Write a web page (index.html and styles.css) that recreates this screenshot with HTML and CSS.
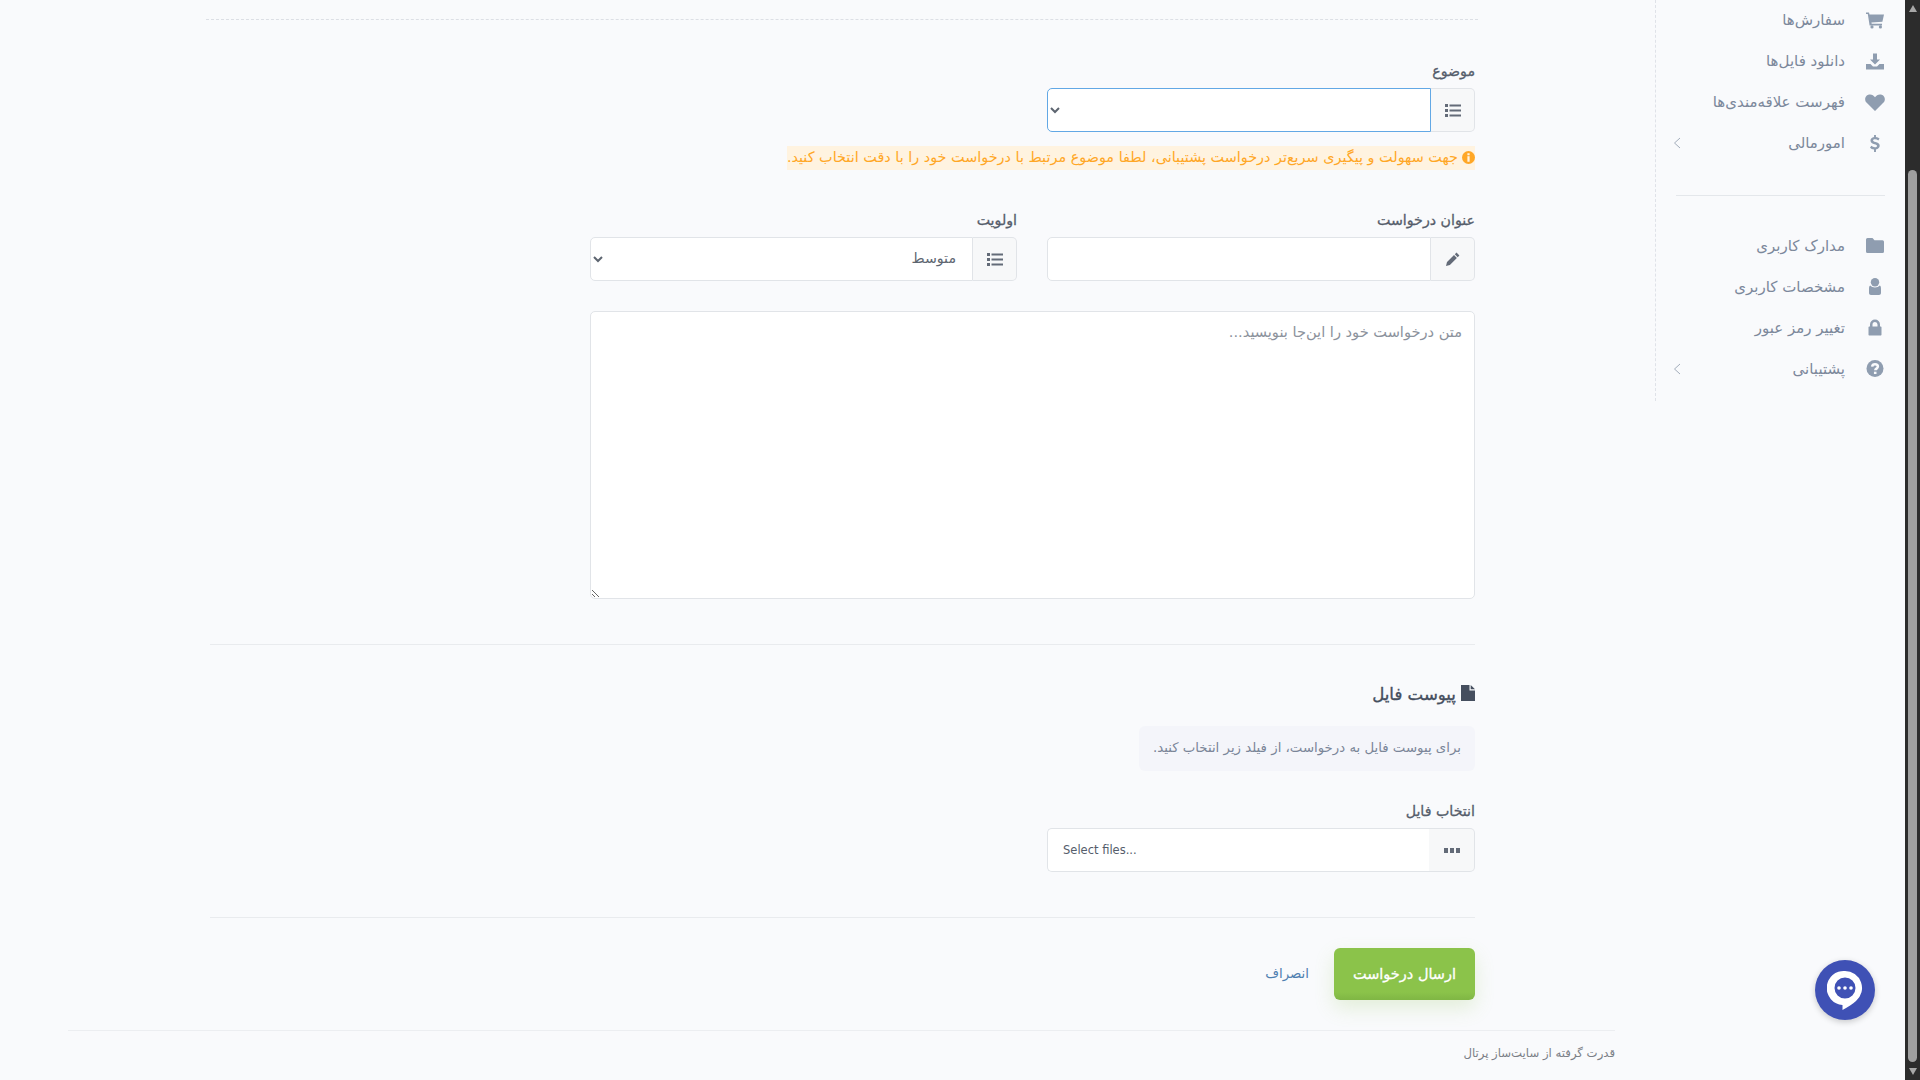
FILE: index.html
```html
<!DOCTYPE html>
<html lang="fa" dir="rtl">
<head>
  <meta charset="UTF-8">
  <title>ارسال درخواست</title>
  <link rel="stylesheet" href="styles.css">
</head>
<body>
  <div class="page">
    <!-- scrollbar -->
    <div class="scrollbar">
      <span class="arrow-up"></span>
      <span class="thumb"></span>
      <span class="arrow-down"></span>
    </div>

    <!-- sidebar -->
    <aside class="sidebar">
      <a class="side-item">
        <svg class="side-icon" viewBox="0 0 18 16"><path d="M0 0h3l.5 2H18l-1.600 7.200-11 .9.3 1.100H16V13H3.600L1.800 1.600H0z"/><circle cx="6" cy="14.400" r="1.600"/><circle cx="14.400" cy="14.400" r="1.600"/></svg>
        <span>سفارش‌ها</span>
      </a>
      <a class="side-item">
        <svg class="side-icon" viewBox="0 0 18 16"><path d="M7 0h4v6h3l-5 5-5-5h3z"/><path d="M0 10.500h4.500L7 13h4l2.500-2.500H18V16H0z"/></svg>
        <span>دانلود فایل‌ها</span>
      </a>
      <a class="side-item">
        <svg class="side-icon heart" viewBox="0 0 20 17"><path d="M10 17 1.500 8.600C-1.200 5.600.3.500 5 .5c2.200 0 3.800 1.100 5 2.800C11.200 1.600 12.800.5 15 .5c4.700 0 6.200 5.100 3.500 8.100z"/></svg>
        <span>فهرست علاقه‌مندی‌ها</span>
      </a>
      <a class="side-item">
        <svg class="side-icon" viewBox="0 0 18 18"><path d="M8 0h2v2.200c1.600.2 2.900.8 3.800 1.500l-1.300 2.100c-1-.7-2.200-1.200-3.500-1.200-1.300 0-2 .5-2 1.200 0 .8.800 1.100 2.500 1.600 2.500.7 4.500 1.600 4.500 4.100 0 2-1.500 3.400-4 3.800V18H8v-2.700c-1.900-.2-3.400-1-4.300-1.900l1.400-2c1.100.9 2.400 1.500 3.800 1.500 1.400 0 2.200-.5 2.200-1.300 0-.9-.9-1.200-2.600-1.700-2.300-.7-4.300-1.500-4.300-4 0-2 1.500-3.300 3.800-3.700z"/></svg>
        <span>امورمالی</span>
        <svg class="side-chevron" viewBox="0 0 8 12"><path d="M7 1 1.500 6 7 11"/></svg>
      </a>
      <div class="side-divider"></div>
      <a class="side-item">
        <svg class="side-icon" viewBox="0 0 18 15"><path d="M1.500 0h5l2 2.200h8A1.500 1.500 0 0 1 18 3.700v9.800a1.500 1.500 0 0 1-1.500 1.500h-15A1.500 1.500 0 0 1 0 13.500v-12A1.500 1.500 0 0 1 1.500 0z"/></svg>
        <span>مدارک کاربری</span>
      </a>
      <a class="side-item">
        <svg class="side-icon" viewBox="0 0 18 17"><circle cx="9" cy="4.200" r="4.200"/><path d="M4.200 7.500c1.100 1.200 2.900 2 4.800 2s3.700-.8 4.800-2c1 .4 1.200 1.800 1.200 3.500v4c0 1.200-.8 2-2 2H5c-1.200 0-2-.8-2-2v-4c0-1.700.2-3.100 1.200-3.500z"/></svg>
        <span>مشخصات کاربری</span>
      </a>
      <a class="side-item">
        <svg class="side-icon" viewBox="0 0 18 16"><path d="M4 7V5a5 5 0 0 1 10 0v2h.5c.6 0 1 .4 1 1v7c0 .6-.4 1-1 1h-11c-.6 0-1-.4-1-1V8c0-.6.4-1 1-1zm2.500 0h5V5a2.500 2.500 0 0 0-5 0z"/></svg>
        <span>تغییر رمز عبور</span>
      </a>
      <a class="side-item">
        <svg class="side-icon" viewBox="0 0 16 16"><circle cx="8" cy="8" r="8"/><path class="cut" d="M5.300 6.200C5.500 4.800 6.600 4 8 4c1.600 0 2.700.9 2.700 2.200 0 1.900-2.400 1.900-2.400 3.500"/><rect class="cut-fill" x="7" y="11" width="2.400" height="2.200"/></svg>
        <span>پشتیبانی</span>
        <svg class="side-chevron" viewBox="0 0 8 12"><path d="M7 1 1.500 6 7 11"/></svg>
      </a>
    </aside>

    <main class="main">
      <div class="content">
        <div class="top-rule"></div>

        <div class="field-row first">
          <div class="field">
            <label class="label">موضوع</label>
            <div class="group">
              <span class="addon">
                <svg class="addon-icon" viewBox="0 0 16 13"><rect y="0" width="3" height="3"/><rect y="5" width="3" height="3"/><rect y="10" width="3" height="3"/><rect x="4.500" y=".5" width="11.500" height="2"/><rect x="4.500" y="5.500" width="11.500" height="2"/><rect x="4.500" y="10.500" width="11.500" height="2"/></svg>
              </span>
              <select class="control is-focus"><option></option></select>
            </div>
          </div>
        </div>
        <div class="hint">
          <span class="hint-text">
            <svg class="hint-icon" viewBox="0 0 14 14"><circle cx="7" cy="7" r="7"/><rect class="hint-i" x="5.800" y="2.400" width="2.400" height="2.200"/><rect class="hint-i" x="5.800" y="5.600" width="2.400" height="6"/></svg>
            <span class="raise">جهت سهولت و پیگیری سریع‌تر درخواست پشتیبانی، لطفا موضوع مرتبط با درخواست خود را با دقت انتخاب کنید.</span>
          </span>
        </div>

        <div class="field-row second">
          <div class="field">
            <label class="label">عنوان درخواست</label>
            <div class="group">
              <span class="addon">
                <svg class="addon-icon pencil" viewBox="0 0 14 14"><path d="M10.500.6 13.400 3.500 11.700 5.200 8.800 2.300zM8 3.100 10.900 6l-7 7L0 14l1-3.900z"/></svg>
              </span>
              <input class="control" type="text">
            </div>
          </div>
          <div class="field">
            <label class="label">اولویت</label>
            <div class="group">
              <span class="addon">
                <svg class="addon-icon" viewBox="0 0 16 13"><rect y="0" width="3" height="3"/><rect y="5" width="3" height="3"/><rect y="10" width="3" height="3"/><rect x="4.500" y=".5" width="11.500" height="2"/><rect x="4.500" y="5.500" width="11.500" height="2"/><rect x="4.500" y="10.500" width="11.500" height="2"/></svg>
              </span>
              <select class="control"><option>متوسط</option></select>
            </div>
          </div>
        </div>

        <textarea class="message" placeholder="متن درخواست خود را این‌جا بنویسید..."></textarea>

        <div class="rule rule-upper"></div>

        <h3 class="section-title">
          <svg class="section-icon" viewBox="0 0 14 16"><path d="M0 0h8.500v5.500H14V16H0z"/><path d="M9.700 0 14 4.300H9.700z"/></svg>
          پیوست فایل
        </h3>
        <div class="note-row"><div class="note">برای پیوست فایل به درخواست، از فیلد زیر انتخاب کنید.</div></div>

        <div class="field-row third">
          <div class="field">
            <label class="label">انتخاب فایل</label>
            <div class="group">
              <span class="addon addon-plain">
                <svg class="dots" viewBox="0 0 16 5"><rect width="4" height="5"/><rect x="6" width="4" height="5"/><rect x="12" width="4" height="5"/></svg>
              </span>
              <div class="control file-text" dir="ltr">Select files...</div>
            </div>
          </div>
        </div>

        <div class="rule rule-lower"></div>

        <div class="actions">
          <button class="btn-send">ارسال درخواست</button>
          <a class="btn-cancel">انصراف</a>
        </div>
      </div>

      <footer class="footer">قدرت گرفته از سایت‌ساز پرتال</footer>
    </main>
  </div>

  <button class="chat-button" aria-label="chat">
    <svg viewBox="0 0 36 42" width="36" height="42"><path d="M18 1a17 17 0 0 1 11 30c-3.200 2.800-8 6-13.500 9V35A17 17 0 0 1 18 1zm0 6.500a10.500 10.500 0 1 0 0 21 10.500 10.500 0 0 0 0-21z" fill="#fff" fill-rule="evenodd"/><circle cx="12" cy="18" r="1.800" fill="#fff"/><circle cx="18" cy="18" r="1.800" fill="#fff"/><circle cx="24" cy="18" r="1.800" fill="#fff"/></svg>
  </button>
</body>
</html>
```

FILE: styles.css
```css
* {
  box-sizing: border-box;
}

html, body {
  margin: 0;
  padding: 0;
  height: 1080px;
  overflow: hidden;
}

body {
  font-family: "DejaVu Sans", sans-serif;
  background: #f9fafc;
  color: #4a5260;
  font-size: 14px;
}

.page {
  display: flex;
  height: 1080px;
  overflow: hidden;
}

/* Scrollbar */
.scrollbar {
  width: 15px;
  flex: none;
  background: #2c2c2c;
  display: flex;
  flex-direction: column;
  align-items: center;
}

.thumb {
  width: 9px;
  height: 892px;
  margin-top: 158px;
  border-radius: 5px;
  background: #a0a0a0;
}

.arrow-up, .arrow-down {
  width: 0;
  height: 0;
  border-left: 4.5px solid transparent;
  border-right: 4.5px solid transparent;
}

.arrow-up {
  margin-top: 5px;
  border-bottom: 7px solid #a8a8a8;
}

.arrow-down {
  margin-top: 6px;
  border-top: 7px solid #a8a8a8;
}

/* Sidebar */
.sidebar {
  width: 250px;
  flex: none;
  height: 401px;
  padding: 0 20px;
  border-left: 1px dashed #dfe2e8;
}

.side-item {
  display: flex;
  align-items: center;
  height: 41px;
  color: #7c889b;
  font-size: 15px;
}

.side-item span {
  margin-top: -2px;
}

.side-divider ~ .side-item span {
  margin-top: 0;
}

.side-icon {
  width: 18px;
  height: 17px;
  margin: 0 1px 0 21px;
  fill: #8f9db0;
  flex: none;
}

.side-icon.heart {
  width: 20px;
  margin: 0 0 0 20px;
}

.side-icon .cut {
  fill: none;
  stroke: #f9fafc;
  stroke-width: 2.400;
}

.side-icon .cut-fill {
  fill: #f9fafc;
}

.side-chevron {
  width: 8px;
  height: 12px;
  margin-top: -2px;
  margin-right: auto;
  margin-left: -3px;
  fill: none;
  stroke: #a3adbb;
  stroke-width: 1;
}

.side-divider ~ .side-item .side-chevron {
  margin-top: 0;
}

.side-divider {
  height: 1px;
  margin: 31px 0 29px;
  background: #e4e7eb;
}

/* Main column */
.main {
  flex: 1;
  min-width: 0;
}

.content {
  padding: 0 180px 0 210px;
}

.top-rule {
  margin: 0 -3px 0 -4px;
  height: 20px;
  border-bottom: 1px dashed #dcdfe5;
}

.field-row {
  display: grid;
  grid-template-columns: 428px 427px;
  column-gap: 30px;
}

.field-row.first {
  margin-top: 40px;
}

.field-row.second {
  margin-top: 39px;
}

.field-row.third {
  margin-top: 29px;
}

.label {
  display: block;
  height: 22px;
  line-height: 22px;
  margin-bottom: 6px;
  font-size: 14.2px;
  -webkit-text-stroke: 0.3px #555d6b;
  color: #555d6b;
}

.group {
  display: flex;
  height: 44px;
}

.addon {
  width: 44px;
  flex: none;
  display: flex;
  align-items: center;
  justify-content: center;
  background: #f7f8f9;
  border: 1px solid #e1e4e8;
  border-left: none;
  border-radius: 0 5px 5px 0;
}

.addon-plain {
  width: 46px;
}

.addon-icon {
  width: 16px;
  height: 13px;
  fill: #636b78;
}

.addon-icon.pencil {
  width: 14px;
  height: 14px;
}

.dots {
  width: 16px;
  height: 5px;
  fill: #636b78;
}

.control {
  flex: 1;
  min-width: 0;
  height: 44px;
  padding: 0 12px 2px 0;
  font-family: "DejaVu Sans", sans-serif;
  font-size: 14.2px;
  color: #5d6570;
  background: #fff;
  border: 1px solid #e1e4e8;
  border-radius: 5px 0 0 5px;
  outline: none;
}

.control.is-focus {
  border-color: #62a8e5;
}

.file-text {
  display: flex;
  align-items: center;
  padding: 0 0 0 15px;
  font-size: 11.5px;
  color: #555d6b;
  border-right: none;
}

.hint {
  margin-top: 14px;
  height: 24px;
}

.hint-text {
  display: inline-flex;
  align-items: center;
  gap: 4px;
  height: 24px;
  background: #fff3e0;
  color: #ffa726;
  font-size: 14.4px;
  white-space: nowrap;
}

.raise {
  margin-top: -2px;
}

.hint-icon {
  width: 13px;
  height: 13px;
  margin-top: -2px;
  fill: #ffa726;
  flex: none;
}

.hint-i {
  fill: #fff3e0;
}

.message {
  display: block;
  width: 885px;
  height: 288px;
  margin-top: 30px;
  padding: 11px 12px;
  font-family: "DejaVu Sans", sans-serif;
  font-size: 14.6px;
  color: #5d6570;
  background: #fff;
  border: 1px solid #e1e4e8;
  border-radius: 5px;
  outline: none;
}

.message::placeholder {
  color: #8c929c;
}

.rule {
  height: 1px;
  background: #e9ebee;
}

.rule-upper {
  margin-top: 45px;
}

.rule-lower {
  margin-top: 45px;
}

.section-title {
  display: flex;
  align-items: center;
  gap: 5px;
  height: 30px;
  margin: 34px 0 0;
  font-size: 16.6px;
  font-weight: normal;
  -webkit-text-stroke: 0.35px #454e5e;
  color: #454e5e;
}

.section-icon {
  width: 14px;
  height: 16px;
  fill: #454e5e;
  margin-top: -3px;
}

.note-row {
  display: flex;
  margin-top: 17px;
}

.note {
  height: 45px;
  line-height: 44px;
  padding: 0 14px;
  font-size: 13.3px;
  color: #7a8598;
  background: #f4f5fa;
  border-radius: 6px;
}

.actions {
  display: flex;
  align-items: center;
  gap: 25px;
  margin-top: 30px;
  height: 52px;
}

.btn-send {
  width: 141px;
  height: 52px;
  font-family: "DejaVu Sans", sans-serif;
  font-size: 14.5px;
  font-weight: normal;
  -webkit-text-stroke: 0.3px #fff;
  color: #fff;
  background: linear-gradient(#8bc34a 85%, #7fb644);
  border: none;
  border-radius: 6px;
  box-shadow: 0 8px 20px rgba(139, 195, 74, 0.2);
}

.btn-cancel {
  margin-top: -2px;
  color: #4f7fb0;
  font-size: 13.3px;
}

.footer {
  margin: 30px 40px 0 0;
  width: 1547px;
  height: 50px;
  padding-top: 15px;
  font-size: 11.7px;
  color: #7b7f87;
  border-top: 1px solid #eceef1;
}

/* Chat button */
.chat-button {
  position: fixed;
  left: 1815px;
  top: 960px;
  width: 60px;
  height: 60px;
  padding: 2px 0 0;
  display: flex;
  align-items: center;
  justify-content: center;
  border: none;
  border-radius: 50%;
  background: #3f51b5;
  box-shadow: 0 2px 6px rgba(0, 0, 0, 0.2);
}
```
